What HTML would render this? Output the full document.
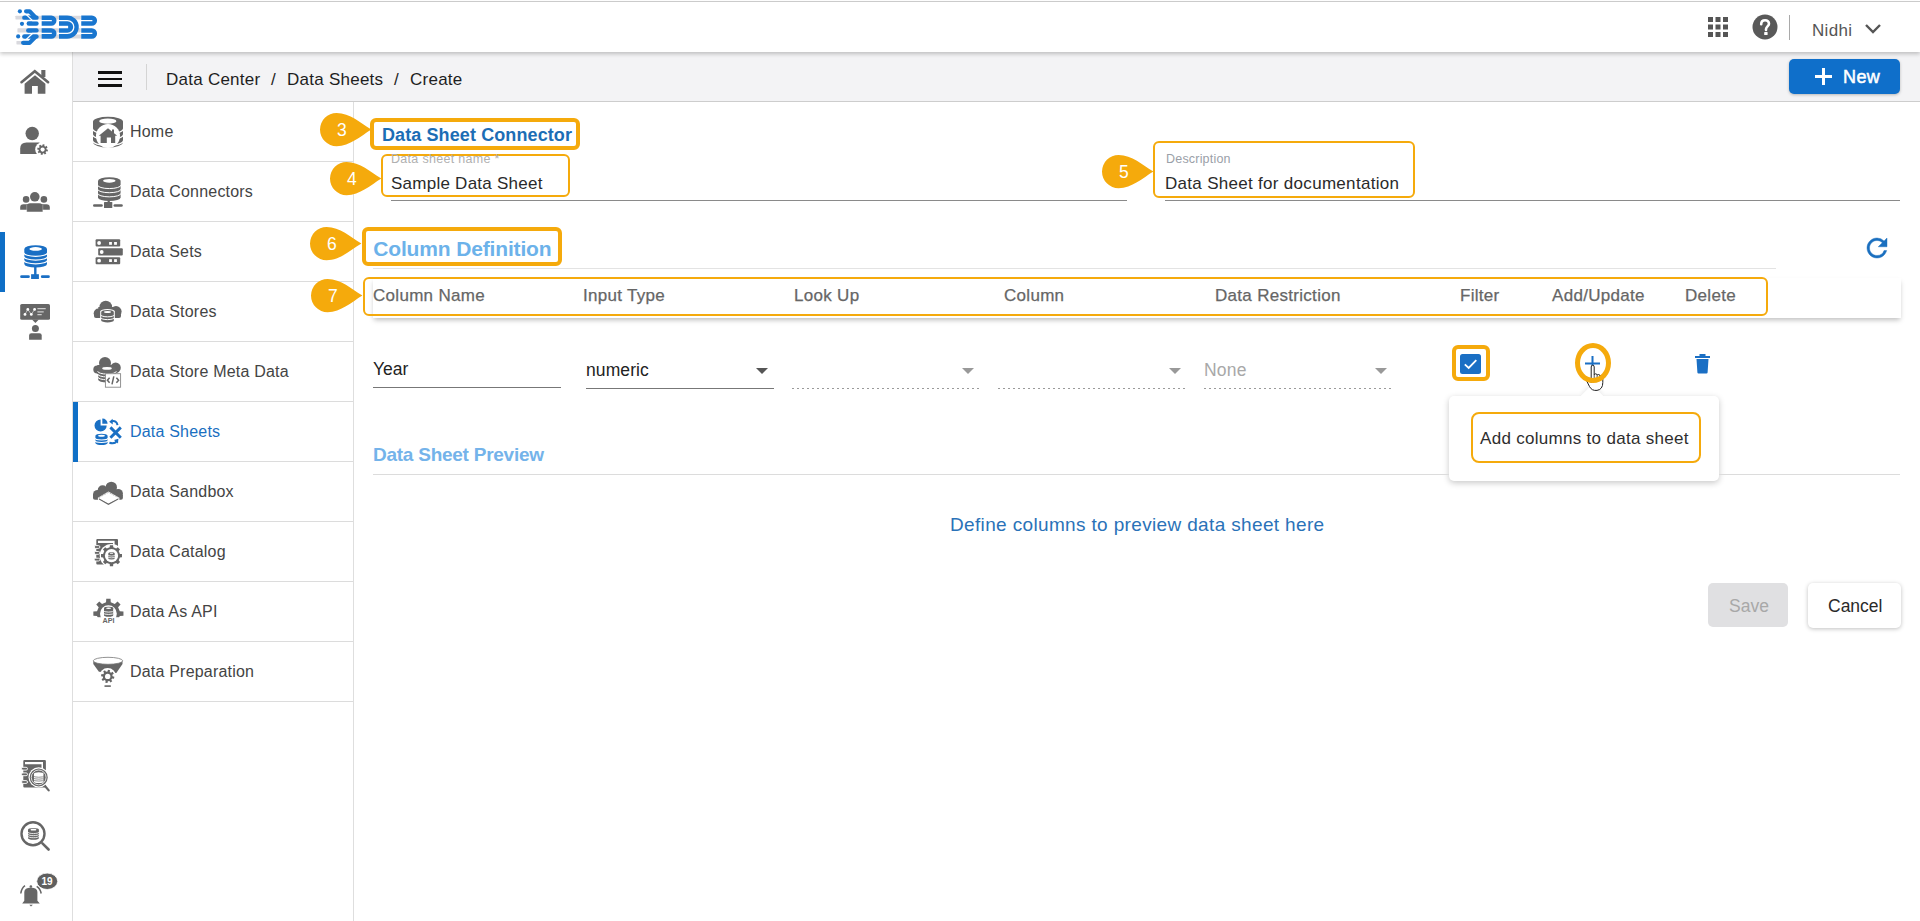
<!DOCTYPE html>
<html><head><meta charset="utf-8">
<style>
*{box-sizing:border-box;margin:0;padding:0}
html,body{width:1920px;height:921px;overflow:hidden;background:#fff;font-family:"Liberation Sans",sans-serif;color:#333}
.a{position:absolute}
.tx{position:absolute;line-height:1;white-space:nowrap}
#topline{left:0;top:1px;width:1920px;height:1px;background:#cbcbcb;z-index:6}
#header{left:0;top:2px;width:1920px;height:50px;background:#fff;box-shadow:0 2px 4px rgba(0,0,0,.22);z-index:5}
#rail{left:0;top:52px;width:73px;height:869px;background:#fff;border-right:1px solid #dedede}
#crumb{left:73px;top:52px;width:1847px;height:50px;background:#f3f3f5;border-bottom:1px solid #cdcdcd}
#menu{left:73px;top:102px;width:281px;height:819px;background:#fff;border-right:1px solid #dedede}
.mi{position:absolute;left:0;width:280px;height:60px;border-bottom:1px solid #dcdcdc}
.mi .tx{left:57px;font-size:16px;color:#444;letter-spacing:.2px}
.mi svg{position:absolute}
.ob{position:absolute;border:3px solid #f5aa0c;border-radius:6px}
.mk{position:absolute;width:52px;height:34px}
</style></head>
<body>
<div id="topline" class="a"></div>
<div id="header" class="a">
  <svg class="a" style="left:10px;top:3px" width="95" height="45" viewBox="0 0 1920 909">
    <g fill="#d9d9de">
      <rect x="110" y="215" width="1320" height="80" rx="10"/>
      <rect x="150" y="470" width="1280" height="85" rx="10"/>
      <rect x="560" y="595" width="900" height="80" rx="10"/>
      <rect x="130" y="725" width="200" height="75" rx="10"/>
    </g>
    <g fill="#1976cf">
      <circle cx="200" cy="128" r="42"/><circle cx="242" cy="380" r="42"/><circle cx="165" cy="635" r="42"/>
      <rect x="245" y="210" width="335" height="90" rx="45"/>
      <rect x="335" y="330" width="245" height="90" rx="45"/>
      <rect x="325" y="470" width="255" height="90" rx="45"/>
      <rect x="245" y="590" width="335" height="90" rx="45"/>
      <path d="M640 210 H835 A105 105 0 0 1 835 420 H640Z M640 470 H835 A105 105 0 0 1 835 680 H640Z"/>
      <path d="M990 210 H1155 A235 235 0 0 1 1155 680 H990Z"/>
      <path d="M1440 210 H1655 A105 105 0 0 1 1655 420 H1440Z M1440 470 H1655 A105 105 0 0 1 1655 680 H1440Z"/>
    </g>
    <g fill="none" stroke="#1976cf" stroke-width="86" stroke-linecap="round" stroke-linejoin="round">
      <path d="M325 127 H395 L505 240"/>
      <path d="M265 765 H395 L505 650"/>
    </g>
    <g fill="none" stroke="#fff" stroke-width="26">
      <path d="M600 315 H845 M600 575 H845 M1400 315 H1665 M1400 575 H1665"/>
      <path d="M960 315 H1160 A130 130 0 0 1 1160 575 H960"/>
      <path d="M330 195 L455 315 H600 M330 695 L455 575 H600"/>
    </g>
    <rect x="960" y="420" width="215" height="50" fill="#fff"/>
    <path d="M580 200 V690 M940 200 V690 M1390 200 V690" stroke="#fff" stroke-width="0"/>
  </svg>
  <svg class="a" style="left:1707.5px;top:15px" width="21" height="21" viewBox="0 0 21 21" fill="#555"><rect x="0" y="0" width="5" height="5"/><rect x="7.5" y="0" width="5" height="5"/><rect x="15" y="0" width="5" height="5"/><rect x="0" y="7.5" width="5" height="5"/><rect x="7.5" y="7.5" width="5" height="5"/><rect x="15" y="7.5" width="5" height="5"/><rect x="0" y="15" width="5" height="5"/><rect x="7.5" y="15" width="5" height="5"/><rect x="15" y="15" width="5" height="5"/></svg>
  <svg class="a" style="left:1752px;top:12px" width="26" height="26" viewBox="0 0 26 26">
    <circle cx="13" cy="13" r="12.5" fill="#595959"/>
    <path d="M9.2 10.2 C9.2 7.6 11 6.3 13.1 6.3 C15.4 6.3 17 7.8 17 9.7 C17 12.3 14 12.6 14 15.3 V16" fill="none" stroke="#fff" stroke-width="2.6" stroke-linecap="round"/>
    <rect x="12.2" y="18" width="3.4" height="3" rx=".6" fill="#fff"/>
  </svg>
  <div class="a" style="left:1789px;top:13px;width:1px;height:25px;background:#a9a9a9"></div>
  <span class="tx" style="left:1812px;top:19.7px;font-size:17px;color:#555;letter-spacing:.3px">Nidhi</span>
  <svg class="a" style="left:1864px;top:19.5px" width="18" height="12" viewBox="0 0 18 12"><path d="M2 3 L9 10 L16 3" fill="none" stroke="#555" stroke-width="2.4"/></svg>
</div>
<div id="rail" class="a"></div>
<div class="a" style="left:0;top:232px;width:5px;height:60px;background:#0f6fc6"></div>
<svg class="a" style="left:15px;top:62px" width="40" height="40" viewBox="0 0 40 40"><path d="M6.5 20.2 L19.8 9.2 L33.1 20.2" fill="none" stroke="#666" stroke-width="2.6" stroke-linecap="round"/><rect x="26.3" y="8" width="4.1" height="7" fill="#666"/>
<path d="M9.6 21.7 L20 13.2 L30.4 21.7 V31.7 H22.8 V24.1 H17 V31.7 H9.6Z" fill="#666"/></svg>
<svg class="a" style="left:15px;top:120px" width="40" height="40" viewBox="0 0 40 40"><circle cx="17.2" cy="13.5" r="6.7" fill="#666"/><path d="M5.2 34.1 V28.5 Q5.2 22.4 11.5 22.4 H24.5 V34.1Z" fill="#666"/>
<circle cx="27.6" cy="29.6" r="7.4" fill="#fff"/><path d="M31.60 29.44 L33.00 29.73 L32.62 31.59 L31.22 31.30 L30.54 32.31 L31.33 33.51 L29.75 34.56 L28.96 33.36 L27.76 33.60 L27.47 35.00 L25.61 34.62 L25.90 33.22 L24.89 32.54 L23.69 33.33 L22.64 31.75 L23.84 30.96 L23.60 29.76 L22.20 29.47 L22.58 27.61 L23.98 27.90 L24.66 26.89 L23.87 25.69 L25.45 24.64 L26.24 25.84 L27.44 25.60 L27.73 24.20 L29.59 24.58 L29.30 25.98 L30.31 26.66 L31.51 25.87 L32.56 27.45 L31.36 28.24Z" fill="#666"/><circle cx="27.6" cy="29.6" r="2.1" fill="#fff"/></svg>
<svg class="a" style="left:15px;top:182px" width="40" height="40" viewBox="0 0 40 40"><g fill="#666"><circle cx="19.8" cy="14.8" r="4.8"/><circle cx="11.1" cy="17.4" r="3.3"/><circle cx="28.9" cy="17.4" r="3.3"/>
<path d="M5.2 27.8 V25.5 Q5.2 22.2 8.5 22.2 H14 V27.8Z"/><path d="M26 22.2 H31.5 Q34.8 22.2 34.8 25.5 V27.8 H26Z"/>
<path d="M11.7 29.8 V24.8 Q11.7 21.3 15.2 21.3 H24.3 Q27.8 21.3 27.8 24.8 V29.8Z"/></g>
<path d="M11.7 23 V29.8 M27.8 23 V29.8" stroke="#fff" stroke-width=".6" opacity=".5"/></svg>
<svg class="a" style="left:15px;top:242px" width="40" height="40" viewBox="0 0 40 40"><path d="M9.3 6.932 V21.968 A11.35 3.632 0 0 0 32 21.968 V6.932 A11.35 3.632 0 0 0 9.3 6.932Z" fill="#1a6fc4"/><path d="M8.8 10.691 A11.85 3.632 0 0 0 32.5 10.691" fill="none" stroke="#fff" stroke-width="1.2"/><path d="M8.8 14.450000000000001 A11.85 3.632 0 0 0 32.5 14.450000000000001" fill="none" stroke="#fff" stroke-width="1.2"/><path d="M8.8 18.209000000000003 A11.85 3.632 0 0 0 32.5 18.209000000000003" fill="none" stroke="#fff" stroke-width="1.2"/><ellipse cx="20.65" cy="6.932" rx="6.24" ry="1.82" fill="#fff"/><rect x="19.1" y="25" width="2.4" height="8" fill="#1a6fc4"/><rect x="16.1" y="32.2" width="7.8" height="4.8" fill="#1a6fc4"/>
<rect x="5.2" y="33.3" width="9.6" height="2.7" rx="1.3" fill="#1a6fc4"/><rect x="25.9" y="33.3" width="8.9" height="2.7" rx="1.3" fill="#1a6fc4"/></svg>
<svg class="a" style="left:15px;top:302px" width="40" height="40" viewBox="0 0 40 40"><rect x="5.2" y="2" width="29.8" height="15.8" rx="1.6" fill="#666"/><path d="M17 17.5 H23.9 L20.4 20.9Z" fill="#666"/>
<path d="M10 12.4 L12.8 7.4 L16.3 12.4 L19.6 7.4" fill="none" stroke="#ddd" stroke-width=".7"/>
<g fill="#fff"><circle cx="12.8" cy="7.4" r="1.4"/><circle cx="19.6" cy="7.4" r="1.4"/><circle cx="10" cy="12.4" r="1.4"/><circle cx="16.3" cy="12.4" r="1.4"/></g>
<path d="M22.4 6.6 H30.7 M22.4 9.9 H28.7 M22.4 12.6 H26.7" stroke="#ccc" stroke-width="1.1"/>
<circle cx="20.4" cy="26.5" r="3.5" fill="#666"/><path d="M14.1 37.8 V33.5 Q14.1 31.3 16.3 31.3 H24.5 Q26.7 31.3 26.7 33.5 V37.8Z" fill="#666"/></svg>
<svg class="a" style="left:15px;top:755px" width="40" height="40" viewBox="0 0 40 40"><rect x="8.3" y="5" width="22.6" height="27.4" rx="1" fill="#666"/><path d="M10 7 H28 V13 H26.5 V9.3 H10Z" fill="#fff"/>
<g fill="#666" stroke="#fff" stroke-width=".9"><rect x="6.5" y="12.3" width="6" height="2.8" rx="1.4"/><rect x="6.5" y="17.9" width="6" height="2.8" rx="1.4"/><rect x="6.5" y="25.6" width="6" height="2.8" rx="1.4"/></g>
<path d="M29.8 30.8 L33.7 35.4" stroke="#666" stroke-width="2.2" stroke-linecap="round"/>
<circle cx="23.7" cy="22.4" r="10.2" fill="#fff"/><circle cx="23.7" cy="22.4" r="9" fill="#666"/><circle cx="23.7" cy="22.4" r="7.4" fill="#666" stroke="#fff" stroke-width=".8"/><path d="M19 18.82 V26.48 A4.75 1.52 0 0 0 28.5 26.48 V18.82 A4.75 1.52 0 0 0 19 18.82Z" fill="#fff"/><path d="M18.5 20.735 A5.25 1.52 0 0 0 29.0 20.735" fill="none" stroke="#777" stroke-width="0.8"/><path d="M18.5 22.65 A5.25 1.52 0 0 0 29.0 22.65" fill="none" stroke="#777" stroke-width="0.8"/><path d="M18.5 24.564999999999998 A5.25 1.52 0 0 0 29.0 24.564999999999998" fill="none" stroke="#777" stroke-width="0.8"/></svg>
<svg class="a" style="left:15px;top:815px" width="40" height="40" viewBox="0 0 40 40"><circle cx="18" cy="18.7" r="11.5" fill="none" stroke="#666" stroke-width="2.4"/><path d="M27.4 28.3 L33.6 34.5" stroke="#666" stroke-width="2.6" stroke-linecap="round"/><path d="M13 14.744 V23.056 A5.449999999999999 1.7439999999999998 0 0 0 23.9 23.056 V14.744 A5.449999999999999 1.7439999999999998 0 0 0 13 14.744Z" fill="#666"/><path d="M12.5 16.822 A5.949999999999999 1.7439999999999998 0 0 0 24.4 16.822" fill="none" stroke="#fff" stroke-width="0.8"/><path d="M12.5 18.9 A5.949999999999999 1.7439999999999998 0 0 0 24.4 18.9" fill="none" stroke="#fff" stroke-width="0.8"/><path d="M12.5 20.978 A5.949999999999999 1.7439999999999998 0 0 0 24.4 20.978" fill="none" stroke="#fff" stroke-width="0.8"/><ellipse cx="18.45" cy="14.744" rx="3.00" ry="0.87" fill="#fff"/></svg>
<svg class="a" style="left:15px;top:870px" width="50" height="40" viewBox="0 0 50 40"><path d="M7.2 33.5 L9.3 30.8 V22 Q9.3 18 15.9 17.6 Q22.4 18 22.4 22 V30.8 L24.8 33.5Z" fill="#666"/><circle cx="15.9" cy="16.5" r="1.3" fill="#666"/>
<path d="M14.3 34.8 H17.8 L16 36.5Z" fill="#666"/>
<path d="M5.8 23.5 Q6.5 18 10 15.6 M21.7 16.3 Q25.3 18.5 26.2 23.5" fill="none" stroke="#666" stroke-width="1.5"/>
<ellipse cx="32.2" cy="11.3" rx="10.5" ry="8.2" fill="#5f5f5f" stroke="#fff" stroke-width=".8"/>
<text x="32" y="14.8" font-family="Liberation Sans" font-weight="bold" font-size="10" fill="#fff" text-anchor="middle">19</text></svg>
<div id="crumb" class="a">
  <div class="a" style="left:25px;top:19px;width:24px;height:16px">
    <div class="a" style="left:0;top:0.4px;width:23.5px;height:2.7px;background:#111"></div>
    <div class="a" style="left:0;top:6.6px;width:23.5px;height:2.7px;background:#111"></div>
    <div class="a" style="left:0;top:12.9px;width:23.5px;height:2.7px;background:#111"></div>
  </div>
  <div class="a" style="left:73px;top:12px;width:1px;height:26px;background:#d4d4d4"></div>
  <span class="tx" style="left:93px;top:19px;font-size:17px;color:#1e1e1e;letter-spacing:.25px">Data Center</span>
  <span class="tx" style="left:198px;top:19px;font-size:17px;color:#1e1e1e;letter-spacing:.25px">/</span>
  <span class="tx" style="left:214px;top:19px;font-size:17px;color:#1e1e1e;letter-spacing:.25px">Data Sheets</span>
  <span class="tx" style="left:321px;top:19px;font-size:17px;color:#1e1e1e;letter-spacing:.25px">/</span>
  <span class="tx" style="left:337px;top:19px;font-size:17px;color:#1e1e1e;letter-spacing:.25px">Create</span>
  <div class="a" style="left:1716px;top:7px;width:111px;height:35px;background:#0f6fca;border-radius:5px;box-shadow:0 1px 3px rgba(0,0,0,.25)">
    <svg class="a" style="left:26px;top:9px" width="17" height="17" viewBox="0 0 17 17"><path d="M8.5 0 V17 M0 8.5 H17" stroke="#fff" stroke-width="3"/></svg>
    <span class="tx" style="left:54px;top:9px;font-size:18px;color:#fff;-webkit-text-stroke:.5px #fff;letter-spacing:.4px">New</span>
  </div>
</div>
<div id="menu" class="a">
  <div class="mi" style="top:0"><span class="tx" style="top:21.8px">Home</span><svg class="a" style="left:15px;top:10px" width="40" height="40" viewBox="0 0 40 40"><path d="M5 9.5 V30 A15 5.6 0 0 0 35 30 V9.5Z" fill="#666"/><ellipse cx="20" cy="9.6" rx="15" ry="4.8" fill="#666"/>
<path d="M4.5 16.8 A15.5 5 0 0 0 35.5 16.8 M4.5 22.6 A15.5 5 0 0 0 35.5 22.6 M4.5 28.6 A15.5 5 0 0 0 35.5 28.6" fill="none" stroke="#fff" stroke-width="1.4"/>
<ellipse cx="19.8" cy="9.2" rx="8.6" ry="2.6" fill="#fff"/>
<circle cx="20" cy="24" r="12" fill="#fff"/>
<path d="M10.8 23.8 L20 16.2 L29.2 23.8 Z" fill="#666"/><rect x="24" y="17.5" width="2" height="4" fill="#666"/>
<path d="M12.6 23 H27.2 V31 H23 V25.5 H18.8 V31 H12.6Z" fill="#666"/></svg></div>
  <div class="mi" style="top:60px"><span class="tx" style="top:21.8px">Data Connectors</span><svg class="a" style="left:15px;top:10px" width="40" height="40" viewBox="0 0 40 40"><path d="M10 8.816 V25.384 A11.3 3.616 0 0 0 32.6 25.384 V8.816 A11.3 3.616 0 0 0 10 8.816Z" fill="#666"/><path d="M9.5 12.958000000000002 A11.8 3.616 0 0 0 33.1 12.958000000000002" fill="none" stroke="#fff" stroke-width="1.0"/><path d="M9.5 17.1 A11.8 3.616 0 0 0 33.1 17.1" fill="none" stroke="#fff" stroke-width="1.0"/><path d="M9.5 21.242000000000004 A11.8 3.616 0 0 0 33.1 21.242000000000004" fill="none" stroke="#fff" stroke-width="1.0"/><ellipse cx="21.3" cy="8.816" rx="6.22" ry="1.81" fill="#fff"/><rect x="19.6" y="28" width="2.2" height="3" fill="#666"/><rect x="16" y="30" width="8.3" height="6" rx=".6" fill="#666"/>
<rect x="5" y="32.2" width="9.8" height="2.6" rx="1.3" fill="#666"/><rect x="25.5" y="32.2" width="9.3" height="2.6" rx="1.3" fill="#666"/></svg></div>
  <div class="mi" style="top:120px"><span class="tx" style="top:21.8px">Data Sets</span><svg class="a" style="left:15px;top:10px" width="40" height="40" viewBox="0 0 40 40"><rect x="7.6" y="7.2" width="24.6" height="7.4" rx="1" fill="#666"/><rect x="10.2" y="16.3" width="24.6" height="7.2" rx="1" fill="#666"/><rect x="7.6" y="25.2" width="24.6" height="7" rx="1" fill="#666"/>
<g fill="#fff"><circle cx="11.1" cy="11" r="1.9"/><circle cx="13.7" cy="20" r="1.9"/><circle cx="11.1" cy="28.7" r="1.9"/>
<rect x="21.1" y="10" width="2.8" height="2.8"/><rect x="26.1" y="10" width="2.8" height="2.8"/><rect x="21.1" y="27.2" width="2.8" height="2.8"/><rect x="26.1" y="27.2" width="2.8" height="2.8"/></g></svg></div>
  <div class="mi" style="top:180px"><span class="tx" style="top:21.8px">Data Stores</span><svg class="a" style="left:15px;top:10px" width="40" height="40" viewBox="0 0 40 40"><g fill="#666"><circle cx="10.3" cy="21.2" r="4.6"/><circle cx="17.8" cy="15" r="6.3"/><circle cx="28" cy="19.6" r="5.6"/><rect x="10.3" y="15" width="17.7" height="11"/><rect x="6" y="21" width="27" height="5" rx="2"/></g>
<path d="M12.2 19.336 V29.064 A7.300000000000001 2.3360000000000003 0 0 0 26.8 29.064 V19.336 A7.300000000000001 2.3360000000000003 0 0 0 12.2 19.336Z" fill="#fff"/><path d="M11.7 22.578666666666663 A7.800000000000001 2.3360000000000003 0 0 0 27.3 22.578666666666663" fill="none" stroke="#fff" stroke-width="0"/><path d="M11.7 25.82133333333333 A7.800000000000001 2.3360000000000003 0 0 0 27.3 25.82133333333333" fill="none" stroke="#fff" stroke-width="0"/><path d="M13.2 20.016000000000002 V28.383999999999997 A6.300000000000001 2.0160000000000005 0 0 0 25.8 28.383999999999997 V20.016000000000002 A6.300000000000001 2.0160000000000005 0 0 0 13.2 20.016000000000002Z" fill="#666"/><path d="M12.7 22.805333333333333 A6.800000000000001 2.0160000000000005 0 0 0 26.3 22.805333333333333" fill="none" stroke="#fff" stroke-width="1.0"/><path d="M12.7 25.59466666666667 A6.800000000000001 2.0160000000000005 0 0 0 26.3 25.59466666666667" fill="none" stroke="#fff" stroke-width="1.0"/><ellipse cx="19.5" cy="20.016000000000002" rx="3.47" ry="1.01" fill="#fff"/></svg></div>
  <div class="mi" style="top:240px"><span class="tx" style="top:21.8px">Data Store Meta Data</span><svg class="a" style="left:15px;top:10px" width="40" height="40" viewBox="0 0 40 40"><g fill="#666"><circle cx="9.3" cy="17.4" r="4"/><circle cx="17" cy="11" r="6"/><circle cx="27.6" cy="15.8" r="5.2"/><rect x="9.3" y="13" width="18" height="9"/></g>
<rect x="9.6" y="13.5" width="19" height="17.6" fill="#fff" opacity="0"/><path d="M10.2 16.416 V27.784000000000002 A8.8 2.8160000000000003 0 0 0 27.8 27.784000000000002 V16.416 A8.8 2.8160000000000003 0 0 0 10.2 16.416Z" fill="#6a6a6a"/><path d="M9.7 19.258 A9.3 2.8160000000000003 0 0 0 28.3 19.258" fill="none" stroke="#fff" stroke-width="1.0"/><path d="M9.7 22.1 A9.3 2.8160000000000003 0 0 0 28.3 22.1" fill="none" stroke="#fff" stroke-width="1.0"/><path d="M9.7 24.942 A9.3 2.8160000000000003 0 0 0 28.3 24.942" fill="none" stroke="#fff" stroke-width="1.0"/><ellipse cx="19.0" cy="16.416" rx="4.84" ry="1.41" fill="#fff"/>
<rect x="17.4" y="21.7" width="15.2" height="13.5" fill="#fff" stroke="#888" stroke-width=".9"/>
<path d="M21.6 25.8 L19.4 28.3 L21.6 30.8 M28.4 25.8 L30.6 28.3 L28.4 30.8 M25.8 24.3 L24 32.3" fill="none" stroke="#666" stroke-width="1.5"/></svg></div>
  <div class="mi" style="top:300px"><span class="tx" style="top:21.8px;color:#1a6fbf">Data Sheets</span><svg class="a" style="left:15px;top:10px" width="40" height="40" viewBox="0 0 40 40"><path d="M12.6 7.4 A6.1 6.1 0 1 0 18.7 13.5 H12.6Z" fill="#1a70c4"/><path d="M14.3 6.6 A5.2 5.2 0 0 1 19.6 11.8 H14.3Z" fill="#1a70c4"/><path d="M7.4 23.652 V31.048 A6.1000000000000005 1.9520000000000002 0 0 0 19.6 31.048 V23.652 A6.1000000000000005 1.9520000000000002 0 0 0 7.4 23.652Z" fill="#1a70c4"/><path d="M6.9 26.117333333333335 A6.6000000000000005 1.9520000000000002 0 0 0 20.1 26.117333333333335" fill="none" stroke="#fff" stroke-width="1.1"/><path d="M6.9 28.582666666666668 A6.6000000000000005 1.9520000000000002 0 0 0 20.1 28.582666666666668" fill="none" stroke="#fff" stroke-width="1.1"/><ellipse cx="13.5" cy="23.652" rx="3.36" ry="0.98" fill="#fff"/>
<path d="M22.4 15.4 L32.8 25.8 M32.8 15.4 L22.4 25.8" stroke="#1a70c4" stroke-width="2.9"/>
<path d="M29.5 13.2 C29 9.5 26.5 8.6 24 9.2" fill="none" stroke="#1a70c4" stroke-width="2"/><path d="M21.2 9.8 L24.6 6.8 L24.8 12.4Z" fill="#1a70c4"/>
<path d="M21.4 30.8 C25 31.8 28 31 29 28.4" fill="none" stroke="#1a70c4" stroke-width="2"/><path d="M26 28 L30.4 26.8 L30 31.6Z" fill="#1a70c4"/></svg></div>
  <div class="mi" style="top:360px"><span class="tx" style="top:21.8px">Data Sandbox</span><svg class="a" style="left:15px;top:10px" width="40" height="40" viewBox="0 0 40 40"><g fill="#666"><circle cx="9.6" cy="22.6" r="4.6"/><circle cx="14.6" cy="18.2" r="4.9"/><circle cx="23.3" cy="15.4" r="5.7"/><circle cx="30.2" cy="21.6" r="4.7"/><path d="M5 22.5 H34.9 V26 Q34.9 27.8 33 27.8 H7 Q5 27.8 5 26Z"/><rect x="12" y="17" width="16" height="8"/></g>
<path d="M9.9 25.7 L20.4 19.6 L31.4 25.7 V27.8 L20.4 33.9 L9.9 27.8Z" fill="#fff"/>
<path d="M10.9 26.3 L20.4 31.6 L30.4 26.3 V27.5 L20.4 33 L10.9 27.5Z" fill="#666"/>
<path d="M11 25.7 L20.4 20.4 L30.3 25.7 L20.4 31Z" fill="#fff"/>
<path d="M11 25.6 L20.4 20.4 L30.3 25.6" fill="none" stroke="#888" stroke-width=".7" stroke-dasharray=".9 .9"/></svg></div>
  <div class="mi" style="top:420px"><span class="tx" style="top:21.8px">Data Catalog</span><svg class="a" style="left:15px;top:10px" width="40" height="40" viewBox="0 0 40 40"><rect x="8.3" y="7" width="21.7" height="25.6" rx="1" fill="#666"/><path d="M10 8.7 H26.6 V14 H25 V10.9 H10Z" fill="#fff"/>
<g fill="#666" stroke="#fff" stroke-width=".9"><rect x="6.3" y="13.6" width="5.6" height="2.8" rx="1.4"/><rect x="6.3" y="19.5" width="5.6" height="2.8" rx="1.4"/><rect x="6.3" y="26.2" width="5.6" height="2.8" rx="1.4"/></g>
<circle cx="23.5" cy="23.7" r="11.8" fill="#fff"/>
<path d="M21.69 15.29 L21.92 13.22 L25.08 13.22 L25.31 15.29 L28.16 16.48 L29.80 15.17 L32.03 17.40 L30.72 19.04 L31.91 21.89 L33.98 22.12 L33.98 25.28 L31.91 25.51 L30.72 28.36 L32.03 30.00 L29.80 32.23 L28.16 30.92 L25.31 32.11 L25.08 34.18 L21.92 34.18 L21.69 32.11 L18.84 30.92 L17.20 32.23 L14.97 30.00 L16.28 28.36 L15.09 25.51 L13.02 25.28 L13.02 22.12 L15.09 21.89 L16.28 19.04 L14.97 17.40 L17.20 15.17 L18.84 16.48Z" fill="#666"/><circle cx="23.5" cy="23.7" r="6.6" fill="#fff"/><path d="M20.3 21.224 V26.576 A3.1999999999999993 1.0239999999999998 0 0 0 26.7 26.576 V21.224 A3.1999999999999993 1.0239999999999998 0 0 0 20.3 21.224Z" fill="#666"/><path d="M19.8 23.008000000000003 A3.6999999999999993 1.0239999999999998 0 0 0 27.2 23.008000000000003" fill="none" stroke="#fff" stroke-width="0.8"/><path d="M19.8 24.792 A3.6999999999999993 1.0239999999999998 0 0 0 27.2 24.792" fill="none" stroke="#fff" stroke-width="0.8"/><ellipse cx="23.5" cy="21.224" rx="1.76" ry="0.51" fill="#fff"/></svg></div>
  <div class="mi" style="top:480px"><span class="tx" style="top:21.8px">Data As API</span><svg class="a" style="left:15px;top:10px" width="40" height="40" viewBox="0 0 40 40"><path d="M18.05 10.34 L18.26 6.65 L22.54 6.65 L22.75 10.34 L26.77 12.00 L29.53 9.54 L32.56 12.57 L30.10 15.33 L31.76 19.35 L35.45 19.56 L35.45 23.84 L31.76 24.05 L30.10 28.07 L32.56 30.83 L29.53 33.86 L26.77 31.40 L22.75 33.06 L22.54 36.75 L18.26 36.75 L18.05 33.06 L14.03 31.40 L11.27 33.86 L8.24 30.83 L10.70 28.07 L9.04 24.05 L5.35 23.84 L5.35 19.56 L9.04 19.35 L10.70 15.33 L8.24 12.57 L11.27 9.54 L14.03 12.00Z" fill="#666"/><circle cx="20.4" cy="21.7" r="8.4" fill="#fff"/><rect x="3" y="25.2" width="33" height="13" fill="#fff"/>
<path d="M16 16.272000000000002 V23.328 A4.6 1.472 0 0 0 25.2 23.328 V16.272000000000002 A4.6 1.472 0 0 0 16 16.272000000000002Z" fill="#666"/><path d="M15.5 18.624000000000002 A5.1 1.472 0 0 0 25.7 18.624000000000002" fill="none" stroke="#fff" stroke-width="0.9"/><path d="M15.5 20.976000000000003 A5.1 1.472 0 0 0 25.7 20.976000000000003" fill="none" stroke="#fff" stroke-width="0.9"/><ellipse cx="20.6" cy="16.272000000000002" rx="2.53" ry="0.74" fill="#fff"/><text x="20.5" y="31.3" font-family="Liberation Sans" font-weight="bold" font-size="7.2" fill="#666" text-anchor="middle">API</text></svg></div>
  <div class="mi" style="top:540px"><span class="tx" style="top:21.8px">Data Preparation</span><svg class="a" style="left:15px;top:10px" width="40" height="40" viewBox="0 0 40 40"><path d="M5.3 8.9 V12 L10.9 19.8 L28.3 21 L34.5 12 V8.9 Z" fill="#666"/><circle cx="19.7" cy="24.4" r="8.4" fill="#fff"/>
<ellipse cx="20" cy="8.8" rx="14.7" ry="3.5" fill="#fff" stroke="#777" stroke-width=".8"/>
<path d="M24.60 24.26 L26.40 24.63 L25.96 26.79 L24.16 26.43 L23.26 27.77 L24.27 29.30 L22.43 30.52 L21.42 28.99 L19.84 29.30 L19.47 31.10 L17.31 30.66 L17.67 28.86 L16.33 27.96 L14.80 28.97 L13.58 27.13 L15.11 26.12 L14.80 24.54 L13.00 24.17 L13.44 22.01 L15.24 22.37 L16.14 21.03 L15.13 19.50 L16.97 18.28 L17.98 19.81 L19.56 19.50 L19.93 17.70 L22.09 18.14 L21.73 19.94 L23.07 20.84 L24.60 19.83 L25.82 21.67 L24.29 22.68Z" fill="#666"/><circle cx="19.7" cy="24.4" r="2.7" fill="#fff"/>
<rect x="16.5" y="33.3" width="6.3" height="1.6" fill="#666"/></svg></div>
  <div class="a" style="left:0;top:300px;width:5px;height:60px;background:#0f6fc6"></div>
</div>

<!-- section 1 -->
<svg class="a" style="left:319.5px;top:112.8px" width="53" height="34" viewBox="0 0 53 34"><path d="M51.4 16.6 C40.5 10 30 0 16.6 0 A16.6 16.6 0 0 0 16.6 33.2 C30 33.2 40.5 23.2 51.4 16.6 Z" fill="#f5aa0c"/><text x="21.8" y="22.900000000000002" font-family="Liberation Sans" font-size="17.5" fill="#fff" text-anchor="middle">3</text></svg>
<div class="ob" style="left:370px;top:118px;width:210px;height:32px;border-width:4px"></div>
<span class="tx" style="left:382px;top:126px;font-size:18px;color:#1c6db5;font-weight:bold;letter-spacing:.1px">Data Sheet Connector</span>

<svg class="a" style="left:330.1px;top:161.6px" width="53" height="34" viewBox="0 0 53 34"><path d="M51.4 16.6 C40.5 10 30 0 16.6 0 A16.6 16.6 0 0 0 16.6 33.2 C30 33.2 40.5 23.2 51.4 16.6 Z" fill="#f5aa0c"/><text x="21.8" y="22.900000000000002" font-family="Liberation Sans" font-size="17.5" fill="#fff" text-anchor="middle">4</text></svg>
<div class="a" style="left:391px;top:200px;width:736px;height:1px;background:#8a8a8a"></div>
<div class="ob" style="left:381px;top:154px;width:189px;height:43px;border-width:2.5px;background:transparent"></div>
<span class="tx" style="left:391px;top:153px;font-size:12.5px;color:#b0b0b0;letter-spacing:.3px">Data sheet name *</span>
<span class="tx" style="left:391px;top:174.8px;font-size:17px;color:#2a2a2a;letter-spacing:.25px">Sample Data Sheet</span>

<svg class="a" style="left:1101.9px;top:154.9px" width="53" height="34" viewBox="0 0 53 34"><path d="M51.4 16.6 C40.5 10 30 0 16.6 0 A16.6 16.6 0 0 0 16.6 33.2 C30 33.2 40.5 23.2 51.4 16.6 Z" fill="#f5aa0c"/><text x="21.8" y="22.900000000000002" font-family="Liberation Sans" font-size="17.5" fill="#fff" text-anchor="middle">5</text></svg>
<div class="a" style="left:1165px;top:200px;width:735px;height:1px;background:#8a8a8a"></div>
<div class="ob" style="left:1153px;top:141px;width:262px;height:57px;border-width:2.5px"></div>
<span class="tx" style="left:1166px;top:152.8px;font-size:12.5px;color:#9aa0a8;letter-spacing:.2px">Description</span>
<span class="tx" style="left:1165px;top:174.8px;font-size:17px;color:#2a2a2a;letter-spacing:.3px">Data Sheet for documentation</span>

<!-- column definition -->
<svg class="a" style="left:310.3px;top:226.8px" width="53" height="34" viewBox="0 0 53 34"><path d="M51.4 16.6 C40.5 10 30 0 16.6 0 A16.6 16.6 0 0 0 16.6 33.2 C30 33.2 40.5 23.2 51.4 16.6 Z" fill="#f5aa0c"/><text x="21.8" y="22.900000000000002" font-family="Liberation Sans" font-size="17.5" fill="#fff" text-anchor="middle">6</text></svg>
<div class="a" style="left:373px;top:268px;width:1403px;height:1px;background:#e3e3e3"></div>
<div class="ob" style="left:362px;top:227px;width:200px;height:39px;border-width:4px"></div>
<span class="tx" style="left:373.2px;top:238px;font-size:21px;color:#6cb2ea;font-weight:bold;letter-spacing:-.15px">Column Definition</span>
<svg class="a" style="left:1861.6px;top:232.9px" width="30" height="30" viewBox="0 0 24 24"><path d="M17.65 6.35A7.958 7.958 0 0 0 12 4C7.58 4 4.01 7.58 4.01 12S7.58 20 12 20c3.73 0 6.84-2.55 7.73-6h-2.08A5.99 5.99 0 0 1 12 18c-3.31 0-6-2.69-6-6s2.69-6 6-6c1.66 0 3.14.69 4.22 1.78L13 11h7V4l-2.35 2.35z" fill="#1a6fbf" stroke="#1a6fbf" stroke-width=".35"/></svg>

<div class="a" style="left:373px;top:278px;width:1528px;height:40px;background:#fff;box-shadow:0 3px 5px -1px rgba(0,0,0,.26)"></div>
<svg class="a" style="left:311.4px;top:278.5px" width="53" height="34" viewBox="0 0 53 34"><path d="M51.4 16.6 C40.5 10 30 0 16.6 0 A16.6 16.6 0 0 0 16.6 33.2 C30 33.2 40.5 23.2 51.4 16.6 Z" fill="#f5aa0c"/><text x="21.8" y="22.900000000000002" font-family="Liberation Sans" font-size="17.5" fill="#fff" text-anchor="middle">7</text></svg>
<div class="ob" style="left:363px;top:277px;width:405px;height:39px;border-width:2.5px;width:1405px"></div>
<span class="tx" style="left:373px;top:287.4px;font-size:17px;color:#666;letter-spacing:.3px;-webkit-text-stroke:.25px #666">Column Name</span>
<span class="tx" style="left:583px;top:287.4px;font-size:17px;color:#666;letter-spacing:.3px;-webkit-text-stroke:.25px #666">Input Type</span>
<span class="tx" style="left:794px;top:287.4px;font-size:17px;color:#666;letter-spacing:.3px;-webkit-text-stroke:.25px #666">Look Up</span>
<span class="tx" style="left:1004px;top:287.4px;font-size:17px;color:#666;letter-spacing:.3px;-webkit-text-stroke:.25px #666">Column</span>
<span class="tx" style="left:1215px;top:287.4px;font-size:17px;color:#666;letter-spacing:.3px;-webkit-text-stroke:.25px #666">Data Restriction</span>
<span class="tx" style="left:1460px;top:287.4px;font-size:17px;color:#666;letter-spacing:.3px;-webkit-text-stroke:.25px #666">Filter</span>
<span class="tx" style="left:1552px;top:287.4px;font-size:17px;color:#666;letter-spacing:.3px;-webkit-text-stroke:.25px #666">Add/Update</span>
<span class="tx" style="left:1685px;top:287.4px;font-size:17px;color:#666;letter-spacing:.3px;-webkit-text-stroke:.25px #666">Delete</span>

<!-- row -->
<span class="tx" style="left:373px;top:361px;font-size:17.5px;color:#222">Year</span>
<div class="a" style="left:373px;top:387px;width:188px;height:1px;background:#777"></div>
<span class="tx" style="left:586px;top:362px;font-size:17.5px;color:#222;letter-spacing:.1px">numeric</span>
<div class="a" style="left:586px;top:388px;width:188px;height:1px;background:#777"></div>
<svg class="a" style="left:756px;top:368px" width="12" height="6" viewBox="0 0 12 6"><path d="M0 0H12L6 6Z" fill="#555"/></svg>

<div class="a" style="left:792px;top:388px;width:187px;height:1px;background:repeating-linear-gradient(90deg,#9a9a9a 0 2px,transparent 2px 5px)"></div>
<svg class="a" style="left:962px;top:368px" width="12" height="6" viewBox="0 0 12 6"><path d="M0 0H12L6 6Z" fill="#999"/></svg>
<div class="a" style="left:998px;top:388px;width:187px;height:1px;background:repeating-linear-gradient(90deg,#9a9a9a 0 2px,transparent 2px 5px)"></div>
<svg class="a" style="left:1169px;top:368px" width="12" height="6" viewBox="0 0 12 6"><path d="M0 0H12L6 6Z" fill="#999"/></svg>
<span class="tx" style="left:1204px;top:362px;font-size:17.5px;color:#a8a8a8;letter-spacing:.2px">None</span>
<div class="a" style="left:1204px;top:388px;width:187px;height:1px;background:repeating-linear-gradient(90deg,#9a9a9a 0 2px,transparent 2px 5px)"></div>
<svg class="a" style="left:1375px;top:368px" width="12" height="6" viewBox="0 0 12 6"><path d="M0 0H12L6 6Z" fill="#999"/></svg>

<div class="ob" style="left:1452px;top:345px;width:38px;height:36px;border-width:4px"></div>
<svg class="a" style="left:1460px;top:354px" width="21" height="20" viewBox="0 0 21 20"><rect width="21" height="20" rx="2.5" fill="#1a6fc4"/><path d="M4.8 10.3 L8.7 14 L16.3 6.2" fill="none" stroke="#fff" stroke-width="1.8"/></svg>

<!-- tooltip -->
<div class="a" style="left:1449px;top:396px;width:270px;height:85px;background:#fff;border-radius:5px;box-shadow:0 2px 6px rgba(0,0,0,.22)"></div>
<div class="a" style="left:1584px;top:388px;width:16px;height:16px;background:#fff;transform:rotate(45deg);box-shadow:-2px -2px 4px rgba(0,0,0,.06)"></div>
<div class="a" style="left:1560px;top:396px;width:64px;height:14px;background:#fff"></div>
<div class="a" style="left:1471px;top:412px;width:230px;height:51px;border:2.5px solid #f5aa0c;border-radius:8px"></div>
<span class="tx" style="left:1480px;top:430px;font-size:17px;color:#2e2e2e;letter-spacing:.3px">Add columns to data sheet</span>


<svg class="a" style="left:1585px;top:356px" width="15" height="15" viewBox="0 0 15 15"><path d="M7.5 0V15M0 7.5H15" stroke="#1a6fc4" stroke-width="2"/></svg>
<svg class="a" style="left:1694px;top:353px" width="17" height="21" viewBox="0 0 17 21"><path d="M1 3H16V5H1Z M5.5 1H11.5V3H5.5Z M2.5 6H14.5L13.6 19.5Q13.5 20.5 12.5 20.5H4.5Q3.5 20.5 3.4 19.5Z" fill="#1a6fc4"/></svg>
<svg class="a" style="left:1585px;top:364px" width="22" height="28" viewBox="0 0 22 28"><path d="M6.2 3 Q6.2 1.2 7.7 1.2 Q9.2 1.2 9.2 3 V10.8 Q9.5 9.8 10.7 9.8 Q12 9.8 12.1 11.2 Q12.5 10.5 13.6 10.5 Q14.9 10.5 15 12 Q15.4 11.4 16.4 11.4 Q17.8 11.4 17.8 13.2 V18.5 Q17.8 25.5 12 26.4 Q6.8 27 4.5 22.5 L1.6 16.8 Q1.1 15.4 2.3 14.9 Q3.5 14.4 4.3 15.8 L6.2 18.6 Z" fill="#fff" stroke="#222" stroke-width="1"/><path d="M9.2 10.8V15.5 M12.1 11.2V15.5 M15 12V15.5" stroke="#222" stroke-width=".8"/></svg>
<div class="a" style="left:1575px;top:343px;width:36px;height:40px;border:5px solid #f5aa0c;border-radius:50%"></div>

<!-- preview -->
<span class="tx" style="left:373px;top:445px;font-size:19px;color:#74b3ea;font-weight:bold;letter-spacing:-.25px">Data Sheet Preview</span>
<div class="a" style="left:373px;top:474px;width:1076px;height:1px;background:#dcdcdc"></div>
<div class="a" style="left:1719px;top:474px;width:181px;height:1px;background:#dcdcdc"></div>
<span class="tx" style="left:950px;top:515px;font-size:19px;color:#2a72b8;letter-spacing:.35px">Define columns to preview data sheet here</span>

<div class="a" style="left:1708px;top:583px;width:80px;height:44px;background:#e0e0e2;border-radius:5px"></div>
<span class="tx" style="left:1729px;top:597.6px;font-size:17.5px;color:#a8a8a8">Save</span>
<div class="a" style="left:1808px;top:583px;width:93px;height:45px;background:#fff;border-radius:5px;box-shadow:0 1px 4px rgba(0,0,0,.25)"></div>
<span class="tx" style="left:1828px;top:597.6px;font-size:17.5px;color:#2a2a2a">Cancel</span>


</body></html>
